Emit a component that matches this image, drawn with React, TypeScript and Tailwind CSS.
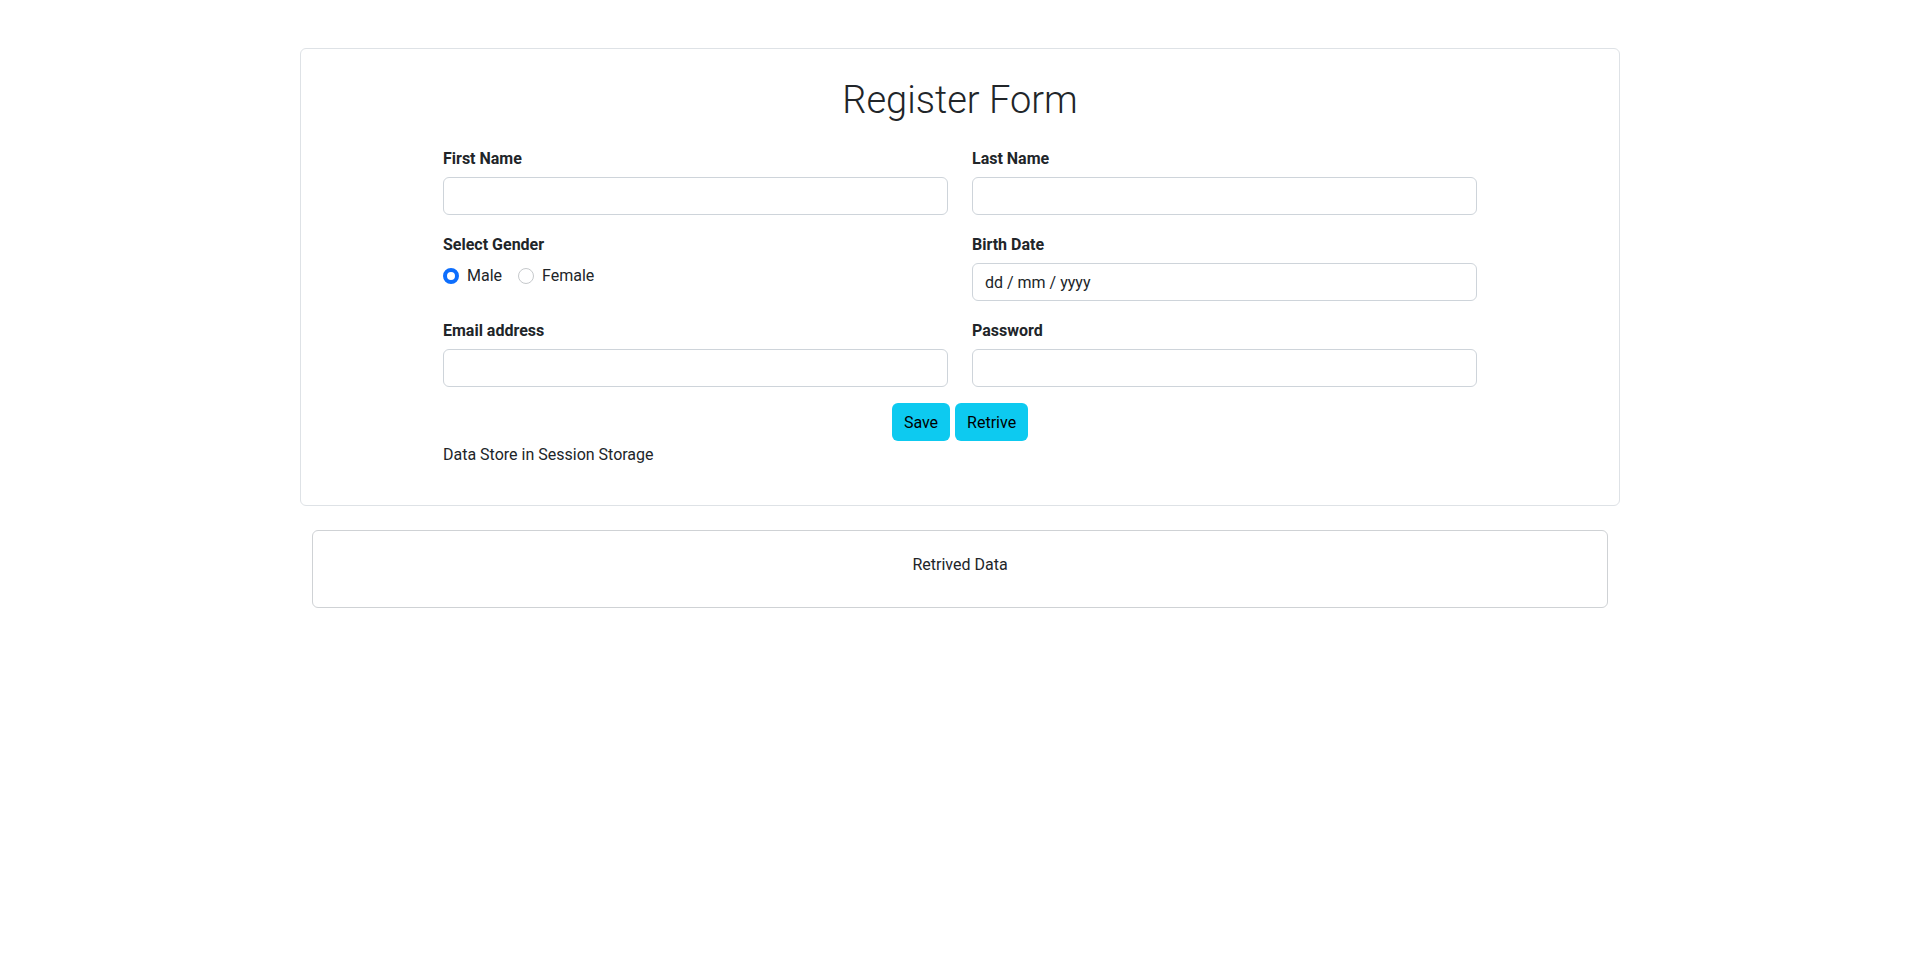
const Field = ({ label, type = "text", placeholder }: { label: string; type?: string; placeholder?: string }) => {
  return (
    <div className="mb-4">
      <label className="block font-bold leading-6 pt-[2px] mb-[6px]">{label}</label>
      <input
        type={type}
        placeholder={placeholder}
        className="block w-full h-[38px] rounded-md border border-[#ced4da] bg-white px-3 leading-6 text-[#212529] placeholder:text-[#212529] outline-none"
      />
    </div>
  );
};

const Radio = ({ label, checked }: { label: string; checked?: boolean }) => {
  return (
    <label className="flex items-center mr-4">
      {checked ? (
        <span className="w-4 h-4 rounded-full border-[4px] border-[#0d6efd] bg-white" />
      ) : (
        <span className="w-4 h-4 rounded-full border border-[#c6c9cc] bg-white" />
      )}
      <span className="ml-2 leading-6">{label}</span>
    </label>
  );
};

const App = () => {
  return (
    <div className="min-h-screen bg-white pt-12 text-[#212529] text-base font-['Segoe_UI',Roboto,'Liberation_Sans',sans-serif]">
      <div className="mx-auto w-[1320px] rounded-md border border-[#dee2e6] px-6 pt-6 pb-6">
        <h1 className="text-center text-[38px] font-light leading-[48px] mb-[21px] pt-[3px]">Register Form</h1>
        <div className="mx-auto w-[1034px]">
          <div className="grid grid-cols-2 gap-x-6">
            <Field label="First Name" />
            <Field label="Last Name" />
            <div className="mb-4">
              <label className="block font-bold leading-6 pt-[2px] mb-[7px]">Select Gender</label>
              <div className="flex">
                <Radio label="Male" checked />
                <Radio label="Female" />
              </div>
            </div>
            <Field label="Birth Date" placeholder="dd / mm / yyyy" />
            <Field label="Email address" type="email" />
            <Field label="Password" type="password" />
          </div>
          <div className="flex justify-center gap-[5px]">
            <button className="h-[38px] px-3 pt-[2px] rounded-md bg-[#0dcaf0] text-black">Save</button>
            <button className="h-[38px] px-3 pt-[2px] rounded-md bg-[#0dcaf0] text-black">Retrive</button>
          </div>
          <p className="leading-6 pt-[2px] mb-[14px]">Data Store in Session Storage</p>
        </div>
      </div>
      <div className="mx-auto mt-6 w-[1296px] rounded-md border border-[#cfd2d5] pt-[22px] pb-[30px] text-center leading-6">
        Retrived Data
      </div>
    </div>
  );
};

export default App;
